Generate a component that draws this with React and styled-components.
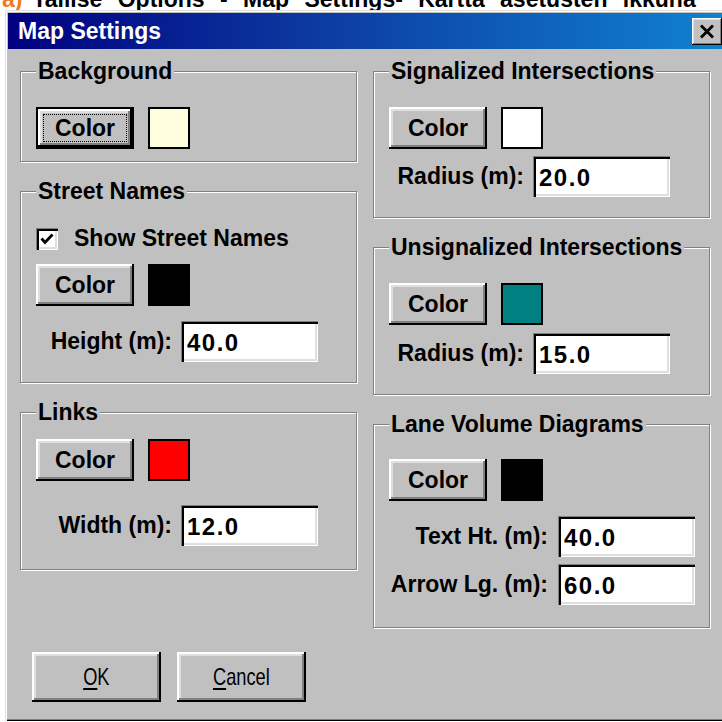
import styled, { createGlobalStyle } from "styled-components";

const GlobalStyle = createGlobalStyle`
  html, body {
    margin: 0;
    padding: 0;
    background: #fff;
    overflow: hidden;
  }
  body {
    font-family: "Liberation Sans", Arial, sans-serif;
  }
`;

const Caption = styled.div`
  height: 10px;
  overflow: hidden;
  white-space: nowrap;
`;

const CaptionText = styled.div`
  margin-top: -12px;
  padding-left: 2px;
  font-size: 23px;
  font-weight: 700;
  line-height: 23px;
  word-spacing: 9px;
  color: #000;
`;

const Mark = styled.span`
  color: #f07a22;
  margin-right: 10px;
`;

// the dialog runs past the right edge of the page
const Window = styled.div`
  margin-left: 5px;
  width: 732px;
  box-sizing: border-box;
  padding: 3px;
  background: #c0c0c0;
  box-shadow: inset 1px 1px 0 #dfdfdf, inset 2px 2px 0 #fff,
    inset -1px -1px 0 #000, inset -2px -2px 0 #808080;
`;

const TitleBar = styled.div`
  height: 36px;
  display: flex;
  align-items: center;
  justify-content: space-between;
  padding: 0 12px 0 10px;
  background: linear-gradient(90deg, #000080 0%, #0c3ea2 45%, #1084d0 100%);
  color: #fff;
  font-size: 23px;
  font-weight: 700;
`;

const CloseButton = styled.button`
  width: 30px;
  height: 27px;
  padding: 0;
  border: 0;
  background: #c0c0c0;
  display: flex;
  align-items: center;
  justify-content: center;
  box-shadow: inset -1px -1px 0 #000, inset 1px 1px 0 #fff,
    inset -2px -2px 0 #808080, inset 2px 2px 0 #dfdfdf;
`;

const Body = styled.div`
  padding: 10px 0 16px 12px;
`;

const Columns = styled.div`
  display: grid;
  grid-template-columns: 337px 337px;
  column-gap: 16px;
  align-items: start;
`;

const Column = styled.div`
  display: flex;
  flex-direction: column;
  gap: 17px;
`;

const Group = styled.fieldset`
  margin: 0;
  min-width: 0;
  padding: ${(p) => p.$pt}px 0 ${(p) => p.$pb}px 15px;
  border: 1px solid #808080;
  box-shadow: 1px 1px 0 #fff, inset 1px 1px 0 #fff;
`;

const Legend = styled.legend`
  padding: 0 2px;
  background: #c0c0c0;
  font-size: 23px;
  font-weight: 700;
  line-height: 24px;
  color: #000;
`;

const Stack = styled.div`
  display: flex;
  flex-direction: column;
  align-items: flex-start;
`;

const Row = styled.div`
  display: flex;
  align-items: center;
  margin-top: ${(p) => p.$mt || 0}px;
  gap: ${(p) => p.$gap || 0}px;
`;

const Button = styled.button`
  width: ${(p) => p.$w}px;
  height: ${(p) => p.$h}px;
  box-sizing: border-box;
  padding: 0;
  border: ${(p) => (p.$default ? "2px solid #000" : "0")};
  background: #c0c0c0;
  color: #000;
  font-family: "Liberation Sans", Arial, sans-serif;
  font-size: 23px;
  font-weight: ${(p) => (p.$plain ? 400 : 700)};
  box-shadow: inset -2px -2px 0 #000, inset 2px 2px 0 #fff,
    inset -4px -4px 0 #808080, inset 4px 4px 0 #dfdfdf;
  outline: ${(p) => (p.$default ? "1px dotted #000" : "none")};
  outline-offset: -8px;
`;

const Narrow = styled.span`
  display: inline-block;
  font-size: 24px;
  transform: scaleX(0.76);

  u {
    text-decoration-thickness: 2px;
    text-underline-offset: 3px;
  }
`;

const Swatch = styled.div`
  width: 42px;
  height: 42px;
  box-sizing: border-box;
  border: 2px solid #000;
  background: ${(p) => p.$color};
`;

const FieldLabel = styled.label`
  width: ${(p) => p.$w}px;
  text-align: right;
  font-size: 23px;
  font-weight: 700;
  white-space: nowrap;
  color: #000;
`;

const Input = styled.input`
  width: 137px;
  height: 41px;
  box-sizing: border-box;
  padding: 2px 0 0 6px;
  border: 0;
  background: #fff;
  color: #000;
  font-family: "Liberation Sans", Arial, sans-serif;
  font-size: 24px;
  font-weight: 700;
  letter-spacing: 1.5px;
  box-shadow: inset 1px 1px 0 #808080, inset 3px 3px 0 #000,
    inset -1px -1px 0 #fff, inset -3px -3px 0 #dfdfdf;
  outline: none;
`;

const CheckBox = styled.span`
  width: 22px;
  height: 22px;
  box-sizing: border-box;
  background: #fff;
  display: flex;
  align-items: center;
  justify-content: center;
  box-shadow: inset 1px 1px 0 #808080, inset 3px 3px 0 #000,
    inset -1px -1px 0 #fff, inset -3px -3px 0 #dfdfdf;
`;

const CheckText = styled.span`
  font-size: 23px;
  font-weight: 700;
  color: #000;
`;

const Actions = styled.div`
  display: flex;
  gap: 16px;
  margin: 24px 0 0 12px;
`;

const ColorRow = ({ color, isDefault, mt }) => (
  <Row $mt={mt} $gap={14}>
    <Button $w={98} $h={42} $default={isDefault}>
      Color
    </Button>
    <Swatch $color={color} />
  </Row>
);

const Field = ({ label, labelWidth, gap = 9, value, mt }) => (
  <Row $mt={mt} $gap={gap}>
    <FieldLabel $w={labelWidth}>{label}</FieldLabel>
    <Input defaultValue={value} />
  </Row>
);

const App = () => {
  return (
    <>
      <GlobalStyle />
      <Caption>
        <CaptionText>
          <Mark>a)</Mark>Tallise Options - Map Settings- Kartta asetusten ikkuna
        </CaptionText>
      </Caption>
      <Window>
        <TitleBar>
          <span>Map Settings</span>
          <CloseButton aria-label="Close">
            <svg width="16" height="15" viewBox="0 0 16 15">
              <path d="M2 1.5 L14 13.5 M14 1.5 L2 13.5" stroke="#000" strokeWidth="2.8" />
            </svg>
          </CloseButton>
        </TitleBar>
        <Body>
          <Columns>
            <Column>
              <Group $pt={24} $pb={12}>
                <Legend>Background</Legend>
                <Stack>
                  <ColorRow color="#ffffe0" isDefault />
                </Stack>
              </Group>
              <Group $pt={22} $pb={20}>
                <Legend>Street Names</Legend>
                <Stack>
                  <Row $gap={16}>
                    <CheckBox>
                      <svg width="14" height="12" viewBox="0 0 14 12">
                        <path d="M1.5 5.5 L5 9.5 L12.5 1.5" fill="none" stroke="#000" strokeWidth="2.8" />
                      </svg>
                    </CheckBox>
                    <CheckText>Show Street Names</CheckText>
                  </Row>
                  <ColorRow color="#000" mt={12} />
                  <Field label="Height (m):" labelWidth={136} value="40.0" mt={15} />
                </Stack>
              </Group>
              <Group $pt={15} $pb={23}>
                <Legend>Links</Legend>
                <Stack>
                  <ColorRow color="#ff0000" />
                  <Field label="Width (m):" labelWidth={136} value="12.0" mt={24} />
                </Stack>
              </Group>
            </Column>
            <Column>
              <Group $pt={24} $pb={20}>
                <Legend>Signalized Intersections</Legend>
                <Stack>
                  <ColorRow color="#fff" />
                  <Field label="Radius (m):" labelWidth={135} value="20.0" mt={7} />
                </Stack>
              </Group>
              <Group $pt={24} $pb={20}>
                <Legend>Unsignalized Intersections</Legend>
                <Stack>
                  <ColorRow color="#008080" />
                  <Field label="Radius (m):" labelWidth={135} value="15.0" mt={8} />
                </Stack>
              </Group>
              <Group $pt={23} $pb={22}>
                <Legend>Lane Volume Diagrams</Legend>
                <Stack>
                  <ColorRow color="#000" />
                  <Field label="Text Ht. (m):" labelWidth={159} gap={10} value="40.0" mt={15} />
                  <Field label="Arrow Lg. (m):" labelWidth={159} gap={10} value="60.0" mt={7} />
                </Stack>
              </Group>
            </Column>
          </Columns>
          <Actions>
            <Button $w={129} $h={50} $plain>
              <Narrow>
                <u>O</u>K
              </Narrow>
            </Button>
            <Button $w={129} $h={50} $plain>
              <Narrow>
                <u>C</u>ancel
              </Narrow>
            </Button>
          </Actions>
        </Body>
      </Window>
    </>
  );
};

export default App;
